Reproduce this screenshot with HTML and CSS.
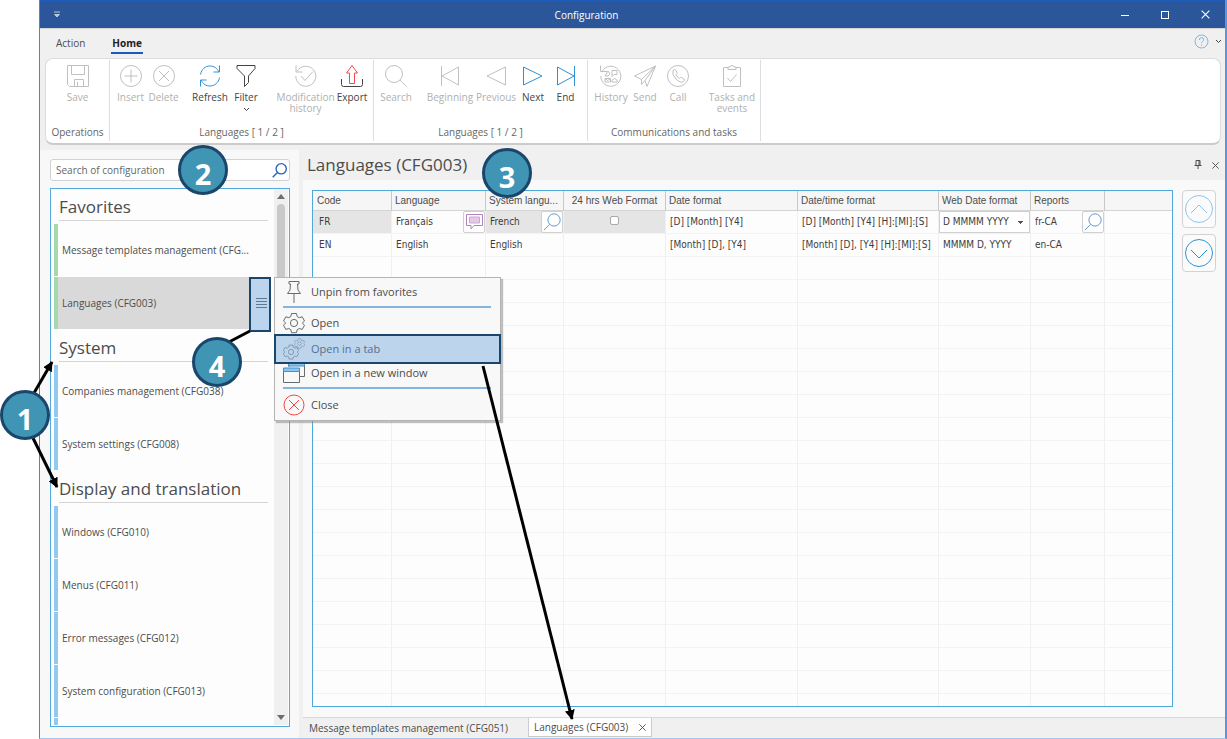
FILE: index.html
```html
<!DOCTYPE html>
<html lang="en">
<head>
<meta charset="utf-8">
<title>Configuration</title>
<link rel="stylesheet" href="styles.css">
</head>
<body>
<svg class="defs" aria-hidden="true">
  <symbol id="lens" viewBox="0 0 22 22"><circle cx="13.500" cy="8.500" r="7.500"/><path d="M8 14 1 21"/></symbol>
  <symbol id="gear" viewBox="0 0 22 22"><path d="M8.500 1.500h5l.7 3 2 1.200 3-.9 2.300 4.200-2.200 2v0l2.200 2.200-2.300 4.200-3-.9-2 1.200-.7 3h-5l-.7-3-2-1.200-3 .9L.5 13.200 2.700 11 .5 9l2.300-4.200 3 .9 2-1.200z"/><circle cx="11" cy="11" r="3.600"/></symbol>
  <symbol id="cross" viewBox="0 0 10 10"><path d="M1.500 1.500l7 7M8.500 1.500l-7 7"/></symbol>
</svg>

<div class="window">
  <header class="titlebar">
    <button class="quick" aria-label="Quick access"><svg width="8" height="8" viewBox="0 0 8 8"><path d="M1 1h6M1.500 3.500h5L4 6z"/></svg></button>
    <h1 class="title">Configuration</h1>
    <div class="controls">
      <button aria-label="Minimize"><svg width="10" height="10" viewBox="0 0 10 10"><path d="M1 5.500h8"/></svg></button>
      <button aria-label="Maximize"><svg width="10" height="10" viewBox="0 0 10 10"><rect x="1.500" y="1.500" width="7" height="7"/></svg></button>
      <button aria-label="Close window"><svg width="11" height="11"><use href="#cross"/></svg></button>
    </div>
  </header>

  <nav class="menubar">
    <button class="menu-tab">Action</button>
    <button class="menu-tab active">Home</button>
    <div class="help">
      <button aria-label="Help"><svg width="15" height="15" viewBox="0 0 15 15"><circle cx="7.500" cy="7.500" r="6.500"/><path d="M5.300 6q0-2.300 2.200-2.300T9.700 5.700q0 1-1.200 1.800-1 .7-1 1.700M7.500 10.500v1.200"/></svg></button>
      <button aria-label="Collapse ribbon" class="dark"><svg width="7" height="5" viewBox="0 0 7 5"><path d="M1 1l2.500 2.500L6 1"/></svg></button>
    </div>
  </nav>

  <section class="ribbon">
    <div class="group">
      <div class="tools">
        <div class="set"><button class="tool w55" disabled><svg viewBox="0 0 22 22"><path d="M.5.500h21v21H2.500l-2-2zM4.500.500v9h13v-9M7.500 21.500v-7h9v7M10.500 17v4"/></svg>Save</button></div>
      </div>
      <h2>Operations</h2>
    </div>
    <div class="group">
      <div class="tools">
        <div class="set">
          <button class="tool w33" disabled><svg viewBox="0 0 22 22"><circle cx="11" cy="11" r="10.500"/><path d="M11 4.500v13M4.500 11h13"/></svg>Insert</button>
          <button class="tool w33" disabled><svg viewBox="0 0 22 22"><circle cx="11" cy="11" r="10.500"/><path d="M6 6l10 10M16 6L6 16"/></svg>Delete</button>
        </div>
        <div class="set">
          <button class="tool w36 blue"><svg viewBox="0 0 22 22"><path d="M1.500 9.500C2.500 4 6.500 1 11 1c4 0 7 2 9 6M20.500.500V7h-6M20.500 12.500c-1 5.500-5 8.500-9.500 8.500-4 0-7-2-9-6M1.500 21.500V15h6"/></svg>Refresh</button>
          <button class="tool w36"><svg viewBox="0 0 22 22"><path d="M2 .500h18v3L13.500 11v6.500l-4 4V11L2 3.500z"/></svg>Filter<svg class="caret" viewBox="0 0 7 5"><path d="M1 1l2.500 2.500L6 1"/></svg></button>
        </div>
        <div class="set">
          <button class="tool w59" disabled><svg viewBox="0 0 22 22"><path d="M2 6.500A10 10 0 1 1 .800 11M1 .500v6.500h6.500M6 11l4 4.500 8-9"/></svg>Modification history</button>
          <button class="tool w34"><svg viewBox="0 0 22 22"><path class="red" d="M8.500 18.500V8h-3L11 .500 16.500 8h-3v10.500z"/><path d="M.5 14v5.500q0 2 2 2h17q2 0 2-2V14"/></svg>Export</button>
        </div>
      </div>
      <h2>Languages [ 1 / 2 ]</h2>
    </div>
    <div class="group">
      <div class="tools">
        <div class="set"><button class="tool w36" disabled><svg viewBox="0 0 22 22"><circle cx="9" cy="9" r="8.500"/><path d="M15 15l6.500 6.500"/></svg>Search</button></div>
        <div class="set">
          <button class="tool w48" disabled><svg viewBox="0 0 22 22"><path d="M2.500 1v20M19.500 2v18L3 11z"/></svg>Beginning</button>
          <button class="tool w44" disabled><svg viewBox="0 0 22 22"><path d="M20.500 2v18L2 11z"/></svg>Previous</button>
          <button class="tool w30 blue"><svg viewBox="0 0 22 22"><path d="M1.500 2v18L20 11z"/></svg>Next</button>
          <button class="tool w35 blue"><svg viewBox="0 0 22 22"><path d="M2.500 2v18L19 11zM19.500 1v20"/></svg>End</button>
        </div>
      </div>
      <h2>Languages [ 1 / 2 ]</h2>
    </div>
    <div class="group">
      <div class="tools">
        <div class="set">
          <button class="tool w38" disabled><svg viewBox="0 0 22 22"><path d="M2 6.500A10 10 0 1 1 .800 11M.5.500v6H7M12 5.500h5v4h-3l-2 2zM5 11l3-5 2 3-2 2zM5 13.500h5.500v3.500H5zM5 13.500l2.700 2 2.800-2M12 17q-1-2 1-2.500 1.500-2 3 0 2 .5 1 2.500z"/></svg>History</button>
          <button class="tool w30" disabled><svg viewBox="0 0 22 22"><path d="M21.500 1L.5 11l7 3.500zM21.500 1L13 21.500 11 15.500zM7.500 14.500v5l3.500-4"/></svg>Send</button>
          <button class="tool w36" disabled><svg viewBox="0 0 22 22"><circle cx="11" cy="11" r="10.500"/><path d="M6 5.500q1.500-2 3 0l1 2q.5 1-1 2 1 2.500 3.500 4 1-1.500 2-1l2.500 1.500q1.500 1-.5 2.500-3 2-7.500-2.500T6 5.500z"/></svg>Call</button>
        </div>
        <div class="set"><button class="tool w48" disabled><svg viewBox="0 0 22 22"><path d="M7 2.500H2.500v19h17v-19H15M7 2v2.500h8V2h-2q0-1.500-2-1.500T9 2zM6.500 13l3 3.500 6-7"/></svg>Tasks and events</button></div>
      </div>
      <h2>Communications and tasks</h2>
    </div>
  </section>

  <div class="workspace">
    <aside class="sidebar">
      <div class="search">
        <input type="text" aria-label="Search of configuration" placeholder="Search of configuration">
        <button aria-label="Search"><svg class="ico-lens" width="15" height="15"><use href="#lens"/></svg></button>
      </div>
      <div class="listbox">
        <div class="list">
          <h3>Favorites</h3>
          <button class="entry green">Message templates management (CFG...</button>
          <div class="entry-row">
            <button class="entry green selected">Languages (CFG003)</button>
            <button class="more" aria-label="Options"><svg width="11" height="10" viewBox="0 0 11 10"><path d="M0 .500h11M0 3.500h11M0 6.500h11M0 9.500h11"/></svg></button>
          </div>
          <h3>System</h3>
          <button class="entry">Companies management (CFG038)</button>
          <button class="entry">System settings (CFG008)</button>
          <h3>Display and translation</h3>
          <button class="entry">Windows (CFG010)</button>
          <button class="entry">Menus (CFG011)</button>
          <button class="entry">Error messages (CFG012)</button>
          <button class="entry">System configuration (CFG013)</button>
          <button class="entry" aria-label="Next entry"></button>
        </div>
        <div class="scroll"><i class="up"></i><i class="thumb"></i><i class="down"></i></div>
      </div>
    </aside>

    <main class="main">
      <div class="page-head">
        <h2>Languages (CFG003)</h2>
        <button aria-label="Pin"><svg width="8" height="10" viewBox="0 0 8 10"><path d="M2 .500h4v5M2 .500v5M5 .500v5M.5 5.500h7M4 5.500V9"/></svg></button>
        <button aria-label="Close"><svg width="9" height="9"><use href="#cross"/></svg></button>
      </div>
      <div class="page-body">
        <div class="grid">
          <table>
            <colgroup><col class="c-code"><col class="c-lang"><col class="c-sys"><col class="c-web"><col class="c-date"><col class="c-time"><col class="c-wdate"><col class="c-rep"><col></colgroup>
            <thead><tr><th>Code</th><th>Language</th><th>System langu...</th><th class="mid">24 hrs Web Format</th><th>Date format</th><th>Date/time format</th><th>Web Date format</th><th>Reports</th><th></th></tr></thead>
            <tbody>
              <tr class="current">
                <td class="gray">FR</td>
                <td><div class="cell">Français<button aria-label="Translate"><svg class="note" width="17" height="16" viewBox="0 0 17 16"><path d="M.5.500h16v11H8l-3 3.500v-3.500H.500z"/><path class="fill" d="M3.500 3h10v6h-10z"/></svg></button></div></td>
                <td class="gray"><div class="cell">French<button aria-label="Find language"><svg class="ico-find" width="18" height="18"><use href="#lens"/></svg></button></div></td>
                <td class="gray mid"><input type="checkbox" aria-label="24 hrs Web Format"></td>
                <td>[D] [Month] [Y4]</td>
                <td>[D] [Month] [Y4] [H]:[MI]:[S]</td>
                <td class="pick"><select aria-label="Web Date format"><option>D MMMM YYYY</option></select></td>
                <td><div class="cell">fr-CA<button aria-label="Find report"><svg class="ico-find" width="18" height="18"><use href="#lens"/></svg></button></div></td>
                <td></td>
              </tr>
              <tr><td>EN</td><td>English</td><td>English</td><td></td><td>[Month] [D], [Y4]</td><td>[Month] [D], [Y4] [H]:[MI]:[S]</td><td>MMMM D, YYYY</td><td>en-CA</td><td></td></tr>
              <tr><td></td><td></td><td></td><td></td><td></td><td></td><td></td><td></td><td></td></tr>
              <tr><td></td><td></td><td></td><td></td><td></td><td></td><td></td><td></td><td></td></tr>
              <tr><td></td><td></td><td></td><td></td><td></td><td></td><td></td><td></td><td></td></tr>
              <tr><td></td><td></td><td></td><td></td><td></td><td></td><td></td><td></td><td></td></tr>
              <tr><td></td><td></td><td></td><td></td><td></td><td></td><td></td><td></td><td></td></tr>
              <tr><td></td><td></td><td></td><td></td><td></td><td></td><td></td><td></td><td></td></tr>
              <tr><td></td><td></td><td></td><td></td><td></td><td></td><td></td><td></td><td></td></tr>
              <tr><td></td><td></td><td></td><td></td><td></td><td></td><td></td><td></td><td></td></tr>
              <tr><td></td><td></td><td></td><td></td><td></td><td></td><td></td><td></td><td></td></tr>
              <tr><td></td><td></td><td></td><td></td><td></td><td></td><td></td><td></td><td></td></tr>
              <tr><td></td><td></td><td></td><td></td><td></td><td></td><td></td><td></td><td></td></tr>
              <tr><td></td><td></td><td></td><td></td><td></td><td></td><td></td><td></td><td></td></tr>
              <tr><td></td><td></td><td></td><td></td><td></td><td></td><td></td><td></td><td></td></tr>
              <tr><td></td><td></td><td></td><td></td><td></td><td></td><td></td><td></td><td></td></tr>
              <tr><td></td><td></td><td></td><td></td><td></td><td></td><td></td><td></td><td></td></tr>
              <tr><td></td><td></td><td></td><td></td><td></td><td></td><td></td><td></td><td></td></tr>
              <tr><td></td><td></td><td></td><td></td><td></td><td></td><td></td><td></td><td></td></tr>
              <tr><td></td><td></td><td></td><td></td><td></td><td></td><td></td><td></td><td></td></tr>
              <tr><td></td><td></td><td></td><td></td><td></td><td></td><td></td><td></td><td></td></tr>
              <tr><td></td><td></td><td></td><td></td><td></td><td></td><td></td><td></td><td></td></tr>
            </tbody>
          </table>
        </div>
        <div class="movers">
          <button class="faded" aria-label="Move up"><svg width="30" height="30" viewBox="0 0 30 30"><circle cx="15" cy="15" r="13.500"/><path d="M7 19l8-8 8 8"/></svg></button>
          <button aria-label="Move down"><svg width="30" height="30" viewBox="0 0 30 30"><circle cx="15" cy="15" r="13.500"/><path d="M7 12l8 8 8-8"/></svg></button>
        </div>
      </div>
      <div class="tabs">
        <button class="tab">Message templates management (CFG051)</button>
        <div class="tab open"><button>Languages (CFG003)</button><button aria-label="Close tab"><svg width="9" height="9"><use href="#cross"/></svg></button></div>
      </div>
    </main>
  </div>
</div>

<div class="context" role="menu">
  <button role="menuitem"><svg viewBox="0 0 22 22"><path d="M6 .500h10v2.500h-1.500l.5 6 2.500 3.500h-13L7 9l.5-6H6zM11 12.500V22"/></svg>Unpin from favorites</button>
  <hr>
  <button role="menuitem"><svg><use href="#gear"/></svg>Open</button>
  <button role="menuitem" class="hot"><svg viewBox="0 0 22 22"><use href="#gear" x="0" y="6" width="16" height="16"/><use href="#gear" x="11" y="0" width="11" height="11"/></svg>Open in a tab</button>
  <button role="menuitem"><svg viewBox="0 0 22 22"><path d="M6 5V1.500h15.500v13H17M.500 6.500h16v14H.500z"/><path class="cap" d="M5.500 1.500h16v2.500h-16zM.500 6h16v3.500H.500z"/></svg>Open in a new window</button>
  <hr>
  <button role="menuitem"><svg class="stop" viewBox="0 0 22 22"><circle cx="11" cy="11" r="10"/><path d="M6 6l10 10M16 6L6 16"/></svg>Close</button>
</div>

<svg class="arrows" aria-hidden="true">
  <defs><marker id="tip" markerWidth="11" markerHeight="10" refX="9" refY="5" orient="auto" markerUnits="userSpaceOnUse"><path d="M0 0l10 5-10 5z"/></marker></defs>
  <path d="M34 393L52 362" marker-end="url(#tip)"/>
  <path d="M33 438L57 487" marker-end="url(#tip)"/>
  <path d="M483 366L572 719" marker-end="url(#tip)"/>
  <path d="M229 342L250 331"/>
</svg>
<span class="callout n1">1</span>
<span class="callout n2">2</span>
<span class="callout n3">3</span>
<span class="callout n4">4</span>
</body>
</html>
```

FILE: styles.css
```css
* { box-sizing: border-box; }

body {
  margin: 0;
  padding-left: 39px;
  background: #fff;
  color: #4c4c4c;
  font: 10px/14px "Open Sans", "Noto Sans", sans-serif;
}

button, input, select { font: inherit; color: inherit; }
button { border: 0; padding: 0; background: none; }
svg { fill: none; stroke: currentColor; flex: none; }
h1, h2, h3 { margin: 0; font-weight: 400; }
.defs { position: absolute; width: 0; height: 0; }

.window {
  display: flex;
  flex-direction: column;
  height: 100vh;
  border-left: 1px solid #4a86d0;
  border-right: 2px solid #5b96dc;
  border-bottom: 1px solid #a5c8f2;
  background: #f0f0f0;
}

/* Title bar */
.titlebar {
  display: grid;
  grid-template-columns: 1fr auto 1fr;
  align-items: center;
  height: 28px;
  flex: none;
  border-top: 1px solid #1c5cbc;
  background: #2b579a;
  color: #fff;
}
.title { font-size: 10px; line-height: 14px; padding-right: 92px; }
.quick { justify-self: start; padding: 0 13px; color: #b9c6dc; line-height: 0; }
.quick path { fill: currentColor; }
.controls { display: flex; justify-content: flex-end; }
.controls button { width: 40px; line-height: 0; }

/* Menu tabs */
.menubar { display: flex; height: 30px; flex: none; padding: 5px 0 0 6px; border-top: 1px solid #d6d6d6; }
.menu-tab { height: 20px; margin: 0 10px; border-bottom: 2px solid transparent; }
.menu-tab + .menu-tab { margin-left: 16px; padding: 0 1px; }
.menu-tab.active { border-color: #185abd; font-weight: 700; color: #222; }
.help { display: flex; gap: 6px; margin-left: auto; height: 14px; align-items: center; padding-right: 3px; color: #7ab8e4; }
.help button { line-height: 0; }
.help .dark { color: #444; }

/* Ribbon */
.ribbon {
  display: flex;
  flex: none;
  height: 87px;
  margin: 0 4px 5px 5px;
  border: 1px solid #dcdcdc;
  border-bottom: 2px solid #cbcbcb;
  border-radius: 8px;
  background: #fff;
}
.group { display: flex; flex-direction: column; padding: 5px 4px 2px; margin: 1px 0 2px; border-right: 1px solid #dedede; }
.group h2 { margin-top: auto; font-size: 10px; line-height: 14px; text-align: center; color: #666; white-space: nowrap; }
.tools, .set { display: flex; align-items: flex-start; }
.tools { gap: 12px; }
.tool { display: flex; flex-direction: column; align-items: center; line-height: 11px; color: #444; white-space: nowrap; }
.tool:disabled { color: #b0b0b0; }
.tool svg { width: 22px; height: 22px; margin-bottom: 5px; }
.tool:disabled svg { stroke: #c0c0c0; }
.tool .caret { width: 7px; height: 5px; margin: 4px 0 0; }
.tool .red { stroke: #f04a4a; }
.tool.blue svg { stroke: #2f92d4; }
.w30 { width: 30px; } .w33 { width: 33px; } .w34 { width: 34px; } .w35 { width: 35px; } .w36 { width: 36px; } .w38 { width: 38px; }
.w44 { width: 44px; } .w48 { width: 48px; white-space: normal; } .w55 { width: 55px; } .w59 { width: 59px; white-space: normal; }

/* Workspace */
.workspace { display: flex; flex: 1; min-height: 0; }
.sidebar { display: flex; flex-direction: column; flex: 0 0 259px; gap: 7px; padding: 9px 9px 11px 10px; background: #f8f8f8; }
.search { display: flex; align-items: center; height: 22px; flex: none; border: 1px solid #d2d2d2; border-radius: 3px; background: #fff; padding: 0 2px 0 5px; color: #2b63b8; }
.search input { flex: 1; min-width: 0; border: 0; padding: 0; background: none; color: #666; }
.search input::placeholder { color: #666; opacity: 1; }
.search button { line-height: 0; }
.ico-lens { stroke-width: 2; }
.ico-find { color: #3f82c8; }

.listbox { display: flex; flex: 1; min-height: 0; padding: 0 1px 1px 3px; border: 1px solid #55a8dc; background: #fdfdfd; }
.list { flex: 1; min-width: 0; overflow: hidden; }
.list h3 { height: 32px; margin: 0 6px 3px 5px; padding-top: 6px; border-bottom: 1px solid #d5d5d5; font-size: 17px; line-height: 24px; white-space: nowrap; }
.entry { display: block; width: 217px; height: 52px; margin-bottom: 1px; padding-left: 4px; border-left: 4px solid #92c9ef; text-align: left; white-space: nowrap; overflow: hidden; }
.entry.green { border-color: #a6d8ae; }
.entry-row { display: flex; height: 53px; }
.entry.selected { background: #d9d9d9; width: 195px; }
.more { width: 22px; height: 55px; flex: none; border: 2px solid #1b466b; background: #bcd4ee; color: #5f7894; line-height: 0; }
.more svg { margin-left: 2px; margin-bottom: 4px; }
.scroll { display: flex; flex-direction: column; align-items: center; width: 14px; background: #f0f0f0; }
.up, .down { border: 4px solid transparent; }
.up { margin-top: 1px; border-bottom: 5px solid #6d6d6d; }
.down { margin: auto 0 1px; border-top: 5px solid #6d6d6d; }
.thumb { width: 8px; height: 190px; margin-top: 5px; border-radius: 4px; background: #c9c9c9; }

.main { display: flex; flex-direction: column; flex: 1; min-width: 0; border-left: 4px solid #f0f0f0; }
.page-head { display: flex; align-items: center; height: 30px; flex: none; gap: 9px; padding: 0 5px 0 4px; }
.page-head h2 { flex: 1; font-size: 17px; line-height: 24px; }
.page-head button { line-height: 0; }
.page-body { display: flex; flex: 1; min-height: 0; gap: 9px; padding: 10px 9px; border-bottom: 1px solid #d8d8d8; background: #f9f9f9; }

/* Data grid */
.grid { flex: 1; min-width: 0; overflow: hidden; border: 1px solid #4fa8dc; background: #fdfdfd; }
table { width: 100%; table-layout: fixed; border-collapse: separate; border-spacing: 0; }
.c-code { width: 79px; } .c-lang { width: 94px; } .c-sys { width: 78px; } .c-web { width: 102px; }
.c-date { width: 132px; } .c-time { width: 141px; } .c-wdate { width: 92px; } .c-rep { width: 74px; }
th { height: 20px; padding: 1px 3px 0; border-right: 1px solid #c8c8c8; border-bottom: 1px solid #d4d4d4; background: #f6f6f6; font: 10px/12px "Liberation Sans", sans-serif; text-align: left; white-space: nowrap; }
td { height: 23px; padding: 0 4px; border-right: 1px solid #f0f0f0; border-bottom: 1px solid #f3f3f3; font: 10px/12px "DejaVu Sans Condensed", sans-serif; white-space: nowrap; color: #3c3c3c; }
td:first-child { padding-left: 6px; }
th:first-child { padding-left: 4px; }
th:last-child, td:last-child { border-right: 0; }
.mid { text-align: center; }
.gray { background: #e5e5e5; }
.cell { display: flex; align-items: center; justify-content: space-between; margin-right: -4px; }
.cell button { display: grid; place-items: center; width: 22px; height: 22px; border: 1px solid #d0d0d0; border-radius: 2px; background: #fff; }
.note { stroke: #b77fc0; }
.note .fill { fill: #e3cbe6; stroke: #cfa4d5; }
input[type="checkbox"] { appearance: none; display: inline-block; width: 9px; height: 9px; margin: 0; border: 1px solid #aaa; border-radius: 2px; background: #fff; }
.pick { padding: 0; }
select { appearance: none; display: block; width: 100%; height: 22px; padding: 0 3px; border: 1px solid #d0d0d0; border-radius: 0; background: linear-gradient(#555, #555) right 6px top 9px / 5px 1px no-repeat, linear-gradient(#555, #555) right 7px top 10px / 3px 1px no-repeat, linear-gradient(#555, #555) right 8px top 11px / 1px 1px no-repeat, #fff; }

.movers { display: flex; flex-direction: column; gap: 6px; }
.movers button { display: grid; place-items: center; width: 34px; height: 38px; border: 1px solid #d2d2d2; border-radius: 4px; background: #fbfbfb; color: #2f92d4; }
.movers .faded { color: #8fc5ea; }

/* Document tabs */
.tabs { display: flex; flex: none; height: 20px; }
.tab { height: 19px; padding: 0 20px 0 6px; white-space: nowrap; }
.tab.open { display: flex; align-items: center; gap: 10px; padding: 0 4px 0 5px; border: 1px solid #ccc; border-top: 0; background: #fff; }
.tab.open svg { display: block; }

/* Context menu */
.context { position: absolute; left: 274px; top: 277px; width: 227px; padding: 2px 0; border: 1px solid #b4b4b4; background: #f8f8f8; box-shadow: 2px 2px 1px #8888; font-size: 11px; }
.context button { display: flex; align-items: center; gap: 6px; width: 100%; height: 24px; padding-left: 8px; }
.context svg { width: 22px; height: 22px; stroke: #6a6a6a; }
.context hr { height: 2px; margin: 2px 9px 3px 8px; border: 0; background: #86b4da; }
.context button.hot { position: relative; height: 30px; margin: -1px -1px -3px; padding-left: 7px; width: 227px; border: 2px solid #1b466b; background: #bcd4ec; color: #56708e; }
.context .hot svg { stroke: #6f859e; }
.context svg.stop { stroke: #f04a4a; }
.context .cap { fill: #8cc4ec; stroke: #3f92d0; }
.context hr + button:last-child { height: 26px; }

/* Callouts */
.arrows { position: absolute; left: 0; top: 0; width: 100%; height: 100%; pointer-events: none; stroke: #000; stroke-width: 3; }
.arrows marker path { fill: #000; stroke: none; }
.callout { position: absolute; display: grid; place-items: center; width: 50px; height: 50px; padding-top: 7px; border: 3px solid #1b466b; border-radius: 50%; background: #4094b4; color: #fff; font-size: 29px; line-height: 37px; font-weight: 700; font-family: "Open Sans", sans-serif; }
.n1 { left: 0; top: 390px; }
.n2 { left: 178px; top: 145px; }
.n3 { left: 482px; top: 148px; }
.n4 { left: 192px; top: 337px; }
```
